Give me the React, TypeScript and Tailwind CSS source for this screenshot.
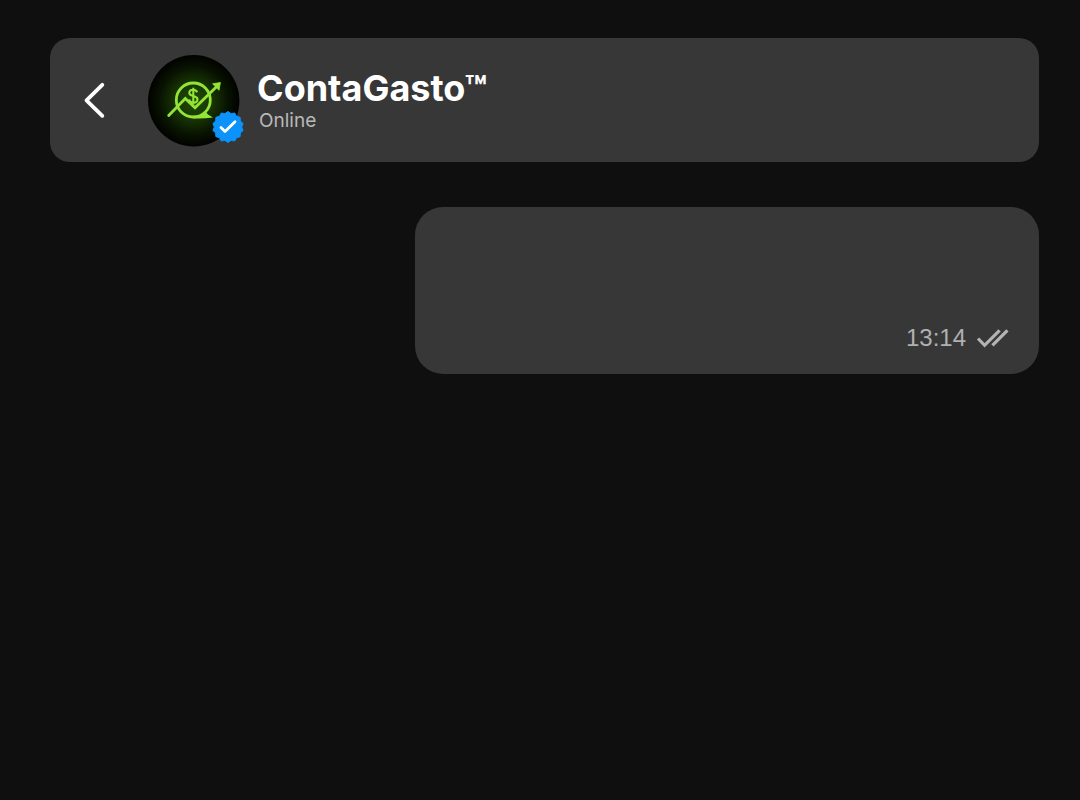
const BADGE_POINTS = Array.from({ length: 28 }, (_, i) => {
  const r = i % 2 === 0 ? 15.5 : 13.7;
  const a = (i * Math.PI) / 14 - Math.PI / 2;
  return `${(16 + r * Math.cos(a)).toFixed(2)},${(16 + r * Math.sin(a)).toFixed(2)}`;
}).join(' ');

function VerifiedBadge() {
  return (
    <svg viewBox="0 0 32 32" className="absolute -right-1 top-14 size-8" role="img" aria-label="Verified">
      <polygon points={BADGE_POINTS} fill="#0b93fb" stroke="#0b93fb" strokeWidth="1" strokeLinejoin="round" />
      <path d="M9 16.6 L13 20.6 L23 10.8" fill="none" stroke="#fff" strokeWidth="2.8" strokeLinecap="round" strokeLinejoin="round" />
    </svg>
  );
}

function Avatar() {
  return (
    <div className="relative size-23 shrink-0">
      <svg viewBox="0 0 92 92" className="size-full" aria-hidden="true">
        <defs>
          <radialGradient id="glow">
            <stop offset="0" stopColor="#214b04" />
            <stop offset="0.4" stopColor="#183603" />
            <stop offset="0.75" stopColor="#081201" />
            <stop offset="1" stopColor="#010200" />
          </radialGradient>
        </defs>
        <circle cx="45.7" cy="45.7" r="45.7" fill="url(#glow)" />
        <circle cx="45.3" cy="45" r="17" fill="none" stroke="#93e436" strokeWidth="2.8" />
        <path d="M20.7 60.4 L37.3 43.4 L47 52.8 L69 31.2" fill="none" stroke="#93e436" strokeWidth="2.8" strokeLinecap="round" />
        <path d="M72.4 27.5 L64.6 28.8 L71 35.3 Z" fill="#93e436" stroke="#93e436" strokeWidth="0.8" strokeLinejoin="round" />
        <path d="M45.3 60.7 L53 61 L57 56 L60 59.6 L65 62.6 Q55 63.9 45.3 63.4 Z" fill="#93e436" />
        <path d="M49.2 37.2 C48.3 35.3 46.8 34.7 45.3 34.7 C43 34.7 41.3 35.9 41.3 37.9 C41.3 42 49.5 39.9 49.5 44.2 C49.5 46.3 47.6 47.6 45.4 47.6 C43.2 47.6 41.5 46.5 41 44.6 M45.3 32.7 V49.6" fill="none" stroke="#93e436" strokeWidth="2.1" />
      </svg>
      <VerifiedBadge />
    </div>
  );
}

function ChatHeader() {
  return (
    <header className="flex h-31 items-center rounded-[20px] bg-[#373737] pt-0.5 pl-8">
      <button type="button" aria-label="Back" className="flex h-10 w-6 items-center">
        <svg viewBox="0 0 24 40" className="h-10 w-6" fill="none" stroke="#fff" strokeWidth="3.8" strokeLinecap="round" strokeLinejoin="round">
          <path d="M20.3 3.8 L4.5 19.3 L20.3 34.8" />
        </svg>
      </button>
      <div className="ml-[42px]">
        <Avatar />
      </div>
      <div className="ml-[17px] flex flex-col">
        <h1 className="text-[36px] leading-10 font-bold text-white">ContaGasto™</h1>
        <p className="pl-0.5 text-[19px] leading-[26px] text-[#b9b9b9]">Online</p>
      </div>
    </header>
  );
}

function Message({ time }: { time: string }) {
  return (
    <article className="mt-[45px] ml-auto flex h-[167px] w-[63.1%] items-end justify-end gap-2 rounded-[28px] bg-[#373737] pr-[29px] pb-5">
      <time className="font-['Liberation_Sans',sans-serif] text-[24px] leading-8 text-[#b0b0b0]">{time}</time>
      <svg viewBox="0 0 36 32" className="h-8 w-9" fill="none" stroke="#b3b3b3" strokeWidth="3.2" role="img" aria-label="Delivered">
        <path d="M4 16.5 L10.6 23.3 L25.6 8.3 M18.4 23.3 L33.4 8.3" />
      </svg>
    </article>
  );
}

export default function App() {
  return (
    <main className="min-h-screen bg-[#0f0f0f] pt-[38px] pr-[41px] pl-[50px] font-['Inter',sans-serif]">
      <ChatHeader />
      <Message time="13:14" />
    </main>
  );
}
